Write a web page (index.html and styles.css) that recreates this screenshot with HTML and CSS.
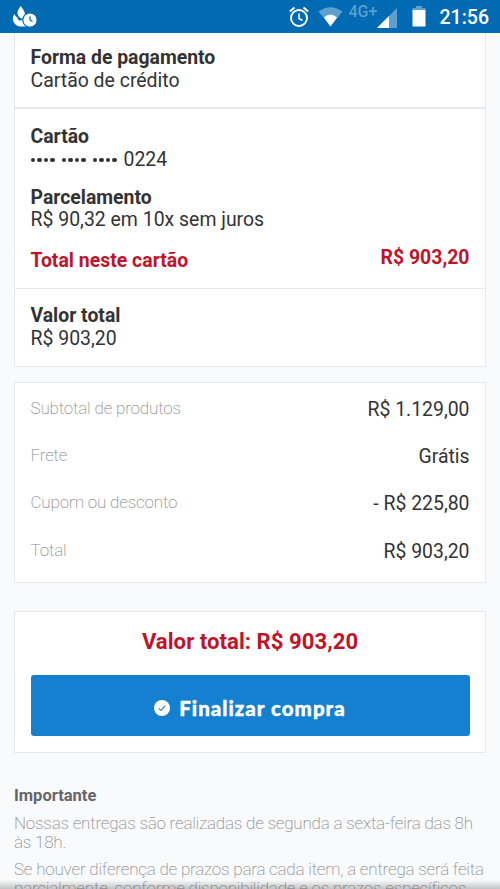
FILE: index.html
```html
<!DOCTYPE html>
<html lang="pt-BR">
<head>
<meta charset="utf-8">
<title>Finalizar compra</title>
<link rel="stylesheet" href="styles.css">
</head>
<body>
<div class="screen">
  <header class="status">
    <svg class="status-app" width="26" height="22" viewBox="0 0 26 22">
      <path d="M8.500 0C12 4 13 7 13 9L10 13C6.500 11 5 9 5.500 6Q6 4 8.500 0Z" fill="#fff"/>
      <path d="M2.500 8Q.5 10 1 14C2 18 5 20.500 9 20.500H15L11 12C10 16 5.500 15 5.500 11.500Q3 10.500 2.500 8Z" fill="#fff"/>
      <circle cx="18" cy="14" r="7.200" fill="#fff" stroke="#006ab3" stroke-width="1.200"/>
      <path d="M18 10.500V14L20.500 15.500" fill="none" stroke="#006ab3" stroke-width="1.300"/>
    </svg>
    <div class="status-right">
      <svg width="20" height="22" viewBox="0 0 20 22" fill="none" stroke="#fff" stroke-width="1.900">
        <circle cx="10" cy="12" r="8"/><path d="M10 7.500V12.500L13.500 14.500" stroke-width="1.500"/><path d="M.8 5.500L5.500 1.500M19.200 5.500L14.500 1.500"/>
      </svg>
      <svg class="wifi" width="25" height="20" viewBox="0 0 25 20">
        <path d="M.5 4.500Q12.500-4 24.500 4.500L12.500 19.500Z" fill="#5d9fcf"/>
        <path d="M6 10.500Q12.500 4.500 19 10.500L12.500 19.500Z" fill="#fff"/>
      </svg>
      <span class="network">4G+</span>
      <svg class="signal" width="20" height="20" viewBox="0 0 20 20">
        <path d="M0 20L20 0V20Z" fill="#5d9fcf"/><path d="M0 20L12 8V20Z" fill="#fff"/>
      </svg>
      <svg class="battery" width="14" height="21" viewBox="0 0 14 21">
        <path d="M4 0H10V2H13.500V6H.5V2H4Z" fill="#5d9fcf"/><path d="M.5 4H13.500V20.500H.5Z" fill="#fff"/>
      </svg>
      <span class="time">21:56</span>
    </div>
  </header>
  <main>
    <section class="card payment">
      <div class="block method"><h2>Forma de pagamento</h2><p>Cartão de crédito</p></div>
      <div class="block details">
        <h2>Cartão</h2>
        <p class="number"><span class="dots"><i></i><i></i><i></i><i></i></span><span class="dots"><i></i><i></i><i></i><i></i></span><span class="dots"><i></i><i></i><i></i><i></i></span>0224</p>
        <h2 class="second">Parcelamento</h2>
        <p>R$ 90,32 em 10x sem juros</p>
        <div class="card-total"><strong>Total neste cartão</strong><strong class="amount">R$ 903,20</strong></div>
      </div>
      <div class="block whole"><h2>Valor total</h2><p>R$ 903,20</p></div>
    </section>
    <dl class="card summary">
      <div><dt>Subtotal de produtos</dt><dd>R$ 1.129,00</dd></div>
      <div><dt>Frete</dt><dd>Grátis</dd></div>
      <div><dt>Cupom ou desconto</dt><dd>- R$ 225,80</dd></div>
      <div><dt>Total</dt><dd>R$ 903,20</dd></div>
    </dl>
    <section class="card checkout">
      <p class="grand">Valor total: R$ 903,20</p>
      <button class="buy" type="button">
        <svg width="16" height="16" viewBox="0 0 16 16"><circle cx="8" cy="8" r="8" fill="#fff"/><path d="M4.800 8.400L7 10.500L11.300 5.600" fill="none" stroke="#1480cf" stroke-width="1.100"/></svg>
        <span>Finalizar compra</span>
      </button>
    </section>
    <section class="notes">
      <h3>Importante</h3>
      <p>Nossas entregas são realizadas de segunda a sexta-feira das 8h<br>às 18h.</p>
      <p>Se houver diferença de prazos para cada item, a entrega será feita<br>parcialmente, conforme disponibilidade e os prazos específicos</p>
    </section>
  </main>
  <div class="shade"></div>
</div>
</body>
</html>
```
FILE: styles.css
```css
* { box-sizing: border-box; }
body { margin: 0; font-family: Roboto, "Liberation Sans", sans-serif; color: #333; background: #f8fafc; }
h2, h3, p, dl, dt, dd { margin: 0; }
.screen { position: relative; width: 500px; height: 889px; overflow: hidden; }
.status { height: 33px; background: #006ab3; display: flex; justify-content: space-between; padding: 0 11px 0 12px; color: #fff; }
.status-app { margin-top: 6px; }
.status-right { display: flex; align-items: flex-start; }
.status-right svg { margin-top: 6px; }
.status-right .wifi { margin: 7px 0 0 9px; }
.status-right .signal { margin: 8px 0 0 -2px; }
.status-right .battery { margin: 6px 0 0 15px; }
.network { margin-left: 6px; font-size: 16px; line-height: 24px; font-weight: 500; color: #5d9fcf; width: 30px; white-space: nowrap; }
.time { margin-left: 14px; font-size: 19.5px; line-height: 35px; font-weight: 500; }
main { padding: 0 14px; }
.card { background: #fff; border: 1px solid #e5e9ed; }
.payment { border-top: 0; height: 334px; }
.block { padding: 0 15.500px; font-size: 19.45px; line-height: 22.5px; }
.block h2 { font-size: 19.4px; font-weight: 700; }
.method { height: 76px; padding-top: 14px; border-bottom: 2px solid #e3e9ef; }
.details { height: 180px; padding-top: 17px; border-bottom: 1px solid #e5e9ed; }
.number { display: flex; align-items: center; }
.dots { display: flex; gap: 2px; margin-right: 7px; }
.dots i { width: 4.500px; height: 4.500px; border-radius: 50%; background: #333; }
.details .second { margin-top: 15.500px; }
.card-total { display: flex; justify-content: space-between; margin-top: 18.500px; color: #c0142b; }
.card-total .amount { margin-top: -3px; }
.whole { padding-top: 16px; }
.summary { margin-top: 15px; height: 201px; padding: 16px 15.500px 0; display: flex; flex-direction: column; gap: 24.700px; font-size: 19.4px; line-height: 22.5px; }
.summary div { display: flex; justify-content: space-between; }
.summary dt { margin-top: -1px; font-size: 17px; line-height: 20px; font-weight: 200; color: #8c8c8c; letter-spacing: -.18px; }
.checkout { margin-top: 28px; height: 142px; padding: 14px 15.500px 0; }
.grand { font-size: 22.2px; line-height: 30px; font-weight: 700; color: #c0142b; text-align: center; }
.buy { margin-top: 19px; width: 100%; height: 61px; border: 0; border-radius: 3px; background: #1480cf; color: #fff; display: flex; align-items: center; justify-content: center; gap: 9px; padding: 4px 0 0; font: 900 20.5px "Lato", sans-serif; letter-spacing: 1px; -webkit-text-stroke: .4px #fff; }
.notes { padding-top: 33px; font-size: 17px; line-height: 19.3px; font-weight: 200; color: #8c8c8c; letter-spacing: -.21px; white-space: nowrap; }
.notes h3 { font-size: 16.5px; line-height: 20px; font-weight: 700; color: #666; letter-spacing: 0; }
.notes p { margin-top: 7px; }
.notes h3 + p { margin-top: 8px; }
.shade { position: absolute; left: 0; right: 0; bottom: 0; height: 9px; background: linear-gradient(rgba(90,90,90,0), rgba(90,90,90,.35)); }
```
